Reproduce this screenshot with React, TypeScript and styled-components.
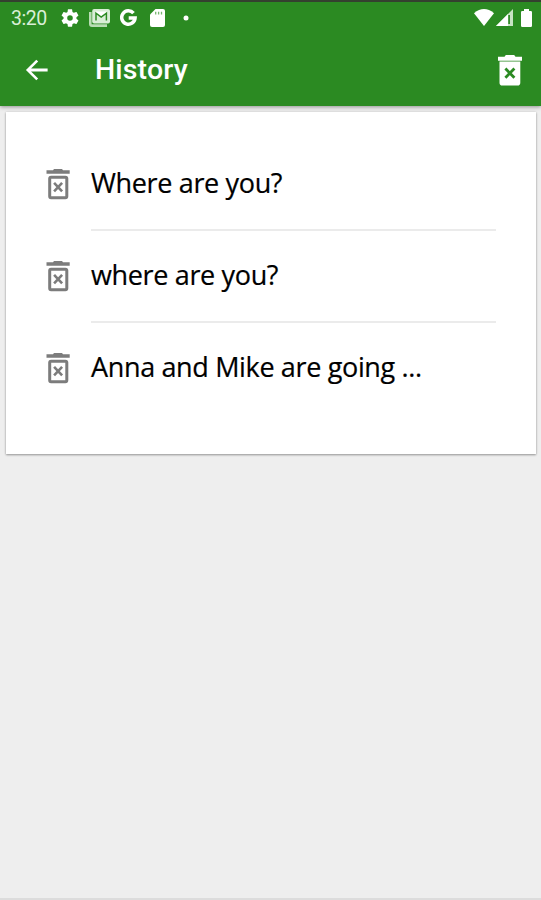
import React from "react";
import styled, { createGlobalStyle } from "styled-components";

const GlobalStyle = createGlobalStyle`
  * { box-sizing: border-box; }
  html, body { margin: 0; padding: 0; background: #eeeeee; }
`;

const Screen = styled.div`
  width: 541px;
  height: 900px;
  display: flex;
  flex-direction: column;
  overflow: hidden;
  background: #eeeeee;
  border-bottom: 2px solid #dcdcdc;
`;

const Header = styled.header`
  flex: none;
  height: 106px;
  background: #2b8a22;
  border-top: 2px solid #34402f;
  box-shadow: 0 1px 4px rgba(0, 0, 0, 0.4);
  color: #fff;
  font-family: Roboto, sans-serif;
`;

const StatusBar = styled.div`
  height: 31px;
  display: flex;
  align-items: center;
  padding: 0 9px 0 11px;
`;

const Clock = styled.span`
  width: 50px;
  padding-top: 2px;
  font-size: 19.5px;
  line-height: 30px;
  letter-spacing: -0.5px;
  color: #d9efd6;
`;

const Glyph = styled.svg<{ $w: number; $h: number; $gap?: number }>`
  flex: none;
  display: block;
  width: ${(p) => p.$w}px;
  height: ${(p) => p.$h}px;
  margin-left: ${(p) => p.$gap ?? 0}px;
`;

const Spacer = styled.div`
  flex: 1;
`;

const Toolbar = styled.div`
  height: 73px;
  display: flex;
  align-items: center;
  padding: 1px 10px 0 20px;
`;

const IconButton = styled.button`
  display: flex;
  padding: 0;
  border: 0;
  background: none;
  color: inherit;
`;

const Title = styled.h1`
  margin: 0 0 0 41px;
  flex: 1;
  font-size: 28.5px;
  line-height: 36px;
  font-weight: 500;
  letter-spacing: 0.15px;
`;

const Card = styled.main`
  flex: none;
  height: 342px;
  margin: 6px 5px 0 6px;
  padding: 27px 40px 0 32px;
  background: #fff;
  box-shadow: 0 1px 2px rgba(0, 0, 0, 0.35), 0 0 3px rgba(0, 0, 0, 0.1);
`;

const Row = styled.div`
  height: 92px;
  display: flex;
`;

const RowIcon = styled.div`
  width: 53px;
  padding-top: 25px;
  color: #7c7c7c;
`;

const Phrase = styled.div<{ $divided: boolean }>`
  flex: 1;
  padding-top: 26px;
  border-bottom: 2px solid ${(p) => (p.$divided ? "#ebebeb" : "transparent")};
  font-family: "Open Sans", sans-serif;
  font-size: 27px;
  line-height: 36px;
  letter-spacing: -0.35px;
  color: #000;
  -webkit-text-stroke: 0.2px #000;
  white-space: nowrap;
`;

const TrashOutline = () => (
  <Glyph $w={40} $h={40} viewBox="0 0 40 40" fill="none" stroke="currentColor">
    <path d="M8.5 6.2H15L16 5h8l1 1.2h6.7v3.6H8.5z" fill="currentColor" stroke="none" />
    <rect x="11.7" y="13.2" width="17.1" height="20.5" rx="1.4" strokeWidth="3" />
    <path d="M16.1 18.9l8 8.4M24.1 18.9l-8 8.4" strokeWidth="2.6" />
  </Glyph>
);

const TrashFilled = () => (
  <Glyph $w={42} $h={42} viewBox="0 0 42 42" fill="currentColor">
    <path d="M9 7.8h6.5L16.8 6h8.4l1.3 1.8H33v4H9z" />
    <path d="M10.5 12.6h20.8v21.2a2.8 2.8 0 0 1-2.8 2.8H13.3a2.8 2.8 0 0 1-2.8-2.8z" />
    <path d="M16.4 19.5l9 9.2M25.4 19.5l-9 9.2" stroke="#2b8a22" strokeWidth="2.8" />
  </Glyph>
);

const phrases = ["Where are you?", "where are you?", "Anna and Mike are going ..."];

export default function App() {
  return (
    <>
      <GlobalStyle />
      <Screen>
        <Header>
          <StatusBar>
            <Clock>3:20</Clock>
            <Glyph $w={18} $h={18} viewBox="2 2 20 20" fill="#fff">
              <path d="M19.14 12.94c.04-.3.06-.61.06-.94 0-.32-.02-.64-.07-.94l2.03-1.58c.18-.14.23-.41.12-.61l-1.92-3.32c-.12-.22-.37-.29-.59-.22l-2.39.96c-.5-.38-1.03-.7-1.62-.94l-.36-2.54c-.04-.24-.24-.41-.48-.41h-3.84c-.24 0-.43.17-.47.41l-.36 2.54c-.59.24-1.13.57-1.62.94l-2.39-.96c-.22-.08-.47 0-.59.22L2.74 8.87c-.12.21-.08.47.12.61l2.03 1.58c-.05.3-.09.63-.09.94s.02.64.07.94l-2.03 1.58c-.18.14-.23.41-.12.61l1.92 3.32c.12.22.37.29.59.22l2.39-.96c.5.38 1.03.7 1.62.94l.36 2.54c.05.24.24.41.48.41h3.84c.24 0 .44-.17.47-.41l.36-2.54c.59-.24 1.13-.56 1.62-.94l2.39.96c.22.08.47 0 .59-.22l1.92-3.32c.12-.22.07-.47-.12-.61l-2.01-1.58zM12 15.1A3.1 3.1 0 1 1 12 8.9a3.1 3.1 0 0 1 0 6.2z" />
            </Glyph>
            <Glyph $w={21} $h={18} $gap={10} viewBox="0 0 21 18">
              <path d="M1.3 3v12Q1.3 16.6 3 16.6H18" fill="none" stroke="#b9ddb4" strokeWidth="2.6" />
              <rect x="3.2" y="0" width="17.8" height="14.5" rx="2" fill="#d9eed6" />
              <path d="M7 11.5V4.2l5.2 3.9 5.2-3.9v7.3" fill="none" stroke="#2b8a22" strokeWidth="1.5" />
              <path d="M6.5 2.5h11.4l-5.7 4.2z" fill="#fff" />
            </Glyph>
            <Glyph $w={17} $h={17} $gap={10} viewBox="0 0 17 17">
              <path d="M13.5 4.1A6.7 6.7 0 1 0 15.1 8.9H8.7" fill="none" stroke="#fff" strokeWidth="3.5" />
            </Glyph>
            <Glyph $w={15} $h={18} $gap={13} viewBox="0 0 15 18">
              <path fill="#fff" d="M5.5 0H13a2 2 0 0 1 2 2v14a2 2 0 0 1-2 2H2a2 2 0 0 1-2-2V5.5z" />
              <path d="M5.7 2.8v2.6M8.6 2.8v2.6M11.5 2.8v2.6" stroke="#76b670" strokeWidth="1.3" />
            </Glyph>
            <Glyph $w={6} $h={6} $gap={18} viewBox="0 0 6 6">
              <circle cx="3" cy="3" r="2.5" fill="#fff" />
            </Glyph>
            <Spacer />
            <Glyph $w={20} $h={17} viewBox="0 0 20 17" fill="#fff">
              <path d="M0 4.2Q10-4 20 4.2L10 17z" />
            </Glyph>
            <Glyph $w={17} $h={17} $gap={2} viewBox="0 0 17 17">
              <path d="M17 0v17H0z" fill="#c8e4c4" />
              <path d="M12 5v12H0z" fill="#fff" />
              <path d="M13.1 6v9" stroke="#2b8a22" strokeWidth="1.7" />
            </Glyph>
            <Glyph $w={11} $h={18} $gap={8} viewBox="0 0 11 18">
              <path fill="#fff" d="M3 0h5v2h1.8Q11 2 11 3.2v13.6q0 1.2-1.2 1.2H1.2Q0 18 0 16.8V3.2Q0 2 1.2 2H3z" />
            </Glyph>
          </StatusBar>
          <Toolbar>
            <IconButton aria-label="Back">
              <Glyph $w={34} $h={34} viewBox="0 0 24 24" fill="#fff">
                <path d="M19.5 11H7.83l5-5L11.5 4.7 4.2 12l7.3 7.3 1.3-1.3-5-5H19.5v-2z" />
              </Glyph>
            </IconButton>
            <Title>History</Title>
            <IconButton aria-label="Clear history">
              <TrashFilled />
            </IconButton>
          </Toolbar>
        </Header>
        <Card>
          {phrases.map((text, i) => (
            <Row key={text}>
              <RowIcon>
                <TrashOutline />
              </RowIcon>
              <Phrase $divided={i < phrases.length - 1}>{text}</Phrase>
            </Row>
          ))}
        </Card>
      </Screen>
    </>
  );
}
